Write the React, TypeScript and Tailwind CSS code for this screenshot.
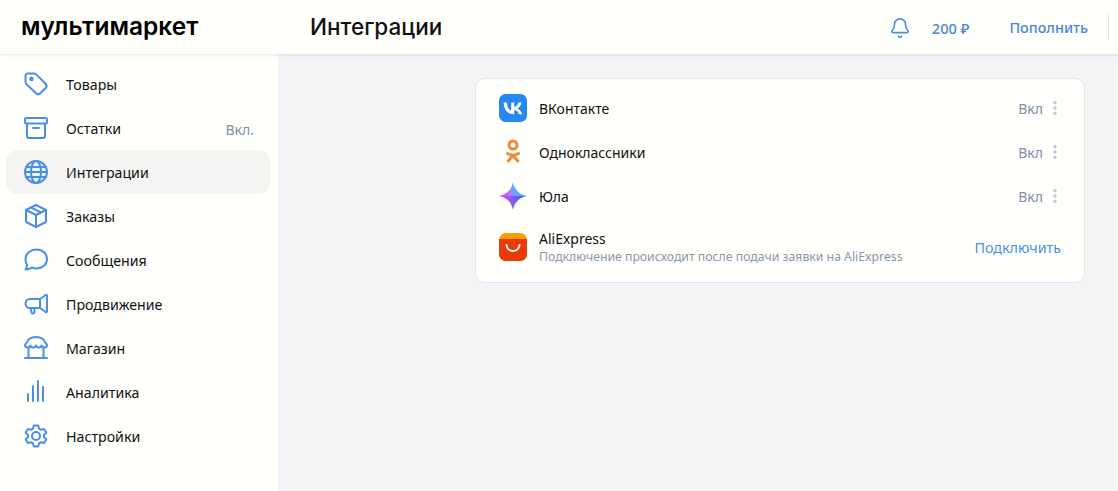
import React from "react";
import { Bell, MoreVertical } from "lucide-react";

const stroke = {
  fill: "none",
  stroke: "#4a8fe7",
  strokeWidth: 2,
  strokeLinecap: "round" as const,
  strokeLinejoin: "round" as const,
};

function NavIcon({ name }: { name: string }) {
  return (
    <svg width="28" height="28" viewBox="0 0 28 28" {...stroke}>
      {name === "tag" && (
        <>
          <path d="M3.500 5.500a2 2 0 0 1 2-2h6.600a3 3 0 0 1 2.100.9l9.400 9.400a3 3 0 0 1 0 4.200l-5.300 5.300a3 3 0 0 1-4.200 0L4.700 14.400a3 3 0 0 1-1.200-2.400z" />
          <circle cx="9.500" cy="9" r="1.200" fill="#4a8fe7" />
        </>
      )}
      {name === "box" && (
        <>
          <rect x="3" y="4" width="22" height="5.500" rx="1.500" />
          <path d="M5 9.500V22a2 2 0 0 0 2 2h14a2 2 0 0 0 2-2V9.500M11 14h6" />
        </>
      )}
      {name === "globe" && (
        <>
          <circle cx="14" cy="14" r="11" />
          <path d="M3 14h22M4.500 9h19M4.500 19h19" />
          <ellipse cx="14" cy="14" rx="5" ry="11" />
        </>
      )}
      {name === "cube" && (
        <>
          <path d="M14 3l10 5v12l-10 5-10-5V8z" />
          <path d="M4 8l10 5 10-5M14 13v12M9 5.500l10 5" />
        </>
      )}
      {name === "chat" && (
        <path d="M14.500 3.500c6 0 10.500 4 10.500 9.500s-4.500 9.500-10.500 9.500c-1.700 0-3.300-.3-4.700-1-1.500 1.200-3.500 2-6.300 2 1-1.500 1.600-3 1.500-5C3.800 17 3.500 15 3.500 13c0-5.500 5-9.500 11-9.500z" />
      )}
      {name === "megaphone" && (
        <>
          <path d="M18 9 23 5.500a1 1 0 0 1 2 .8v14.400a1 1 0 0 1-2 .8l-5-3.500zM18 9H8a4.500 4.500 0 0 0 0 9h10z" />
          <path d="M8.500 18l1 4a1.500 1.500 0 0 0 3 0l-.5-4" />
        </>
      )}
      {name === "shop" && (
        <>
          <path d="M7 5c2-1.300 4.500-2 7-2s5 .7 7 2l4 6c0 1.500-1.200 2.500-2.700 2.500-1.400 0-2.400-1-2.700-2-.3 1-1.300 2-2.800 2-1.400 0-2.500-1-2.800-2-.3 1-1.400 2-2.800 2-1.500 0-2.500-1-2.800-2-.3 1-1.300 2-2.700 2C4.200 13.500 3 12.500 3 11z" />
          <path d="M6.500 13.500V23M21.500 13.500V23M3 24h22" />
        </>
      )}
      {name === "bars" && <path d="M6 23v-7M11 23V8M16 23V3M21 23V9" />}
      {name === "gear" && (
        <>
          <circle cx="14" cy="14" r="4" />
          <path d="M11.800 3.500h4.400l.8 3.200 1.900 1.100 3.200-.9 2.200 3.800-2.400 2.300v2l2.400 2.300-2.200 3.800-3.200-.9-1.900 1.100-.8 3.200h-4.400l-.8-3.200-1.900-1.100-3.200.9-2.200-3.800 2.400-2.300v-2L3.700 10.700l2.200-3.800 3.200.9L11 6.700z" />
        </>
      )}
    </svg>
  );
}

const navItems = [
  { icon: "tag", label: "Товары" },
  { icon: "box", label: "Остатки", note: "Вкл." },
  { icon: "globe", label: "Интеграции", active: true },
  { icon: "cube", label: "Заказы" },
  { icon: "chat", label: "Сообщения" },
  { icon: "megaphone", label: "Продвижение" },
  { icon: "shop", label: "Магазин" },
  { icon: "bars", label: "Аналитика" },
  { icon: "gear", label: "Настройки" },
];

function VkLogo() {
  return (
    <svg width="28" height="28" viewBox="0 0 28 28">
      <rect width="28" height="28" rx="6.500" fill="#2787f5" />
      <path
        fill="#fff"
        d="M14.900 20.200C8.500 20.200 4.900 15.800 4.700 8.500h3.200c.1 5.400 2.500 7.600 4.300 8.100V8.500h3v4.600c1.800-.2 3.700-2.300 4.400-4.600h3c-.5 2.900-2.600 5-4.100 5.900 1.500.7 3.900 2.600 4.800 5.800h-3.300c-.7-2.200-2.500-3.900-4.800-4.100v4.100z"
      />
    </svg>
  );
}

function OkLogo() {
  return (
    <svg width="28" height="28" viewBox="0 0 28 28">
      <g fill="none" stroke="#ee8a3a" strokeWidth="3" strokeLinecap="round">
        <circle cx="14" cy="7" r="4" />
        <path d="M8.500 15.500c3.300 2 7.700 2 11 0M14 17.500l-4.800 5.500M14 17.500l4.800 5.500" />
      </g>
    </svg>
  );
}

function YoulaLogo() {
  return (
    <svg width="28" height="28" viewBox="0 0 28 28">
      <defs>
        <linearGradient id="youla" x1="0.1" y1="0.6" x2="0.9" y2="0.3">
          <stop offset="0" stopColor="#f04cf0" />
          <stop offset="0.45" stopColor="#6fa4fa" />
          <stop offset="1" stopColor="#1fd0fb" />
        </linearGradient>
        <linearGradient id="youlaLow" x1="0" y1="0" x2="1" y2="0">
          <stop offset="0" stopColor="#d055f2" />
          <stop offset="1" stopColor="#2f66f5" />
        </linearGradient>
      </defs>
      <path fill="url(#youla)" d="M14 0c1.500 7.500 6 12.500 14 14H0C8 12.500 12.500 7.500 14 0z" />
      <path fill="url(#youlaLow)" d="M0 14h28c-8 1.500-12.500 6.500-14 14-1.500-7.500-6-12.500-14-14z" />
    </svg>
  );
}

function AliLogo() {
  return (
    <svg width="28" height="28" viewBox="0 0 28 28">
      <rect width="28" height="28" rx="7" fill="#ff9a00" />
      <path fill="#e93a08" d="M0 6h28v15a7 7 0 0 1-7 7H7a7 7 0 0 1-7-7z" />
      <path
        d="M7.500 12c.8 8 12.200 8 13 0"
        fill="none"
        stroke="#fff"
        strokeWidth="2"
        strokeLinecap="round"
      />
    </svg>
  );
}

function OnRow({ logo, name }: { logo: React.ReactNode; name: string }) {
  return (
    <div className="flex h-11 items-center">
      {logo}
      <span className="ml-3 text-[14px] text-[#111]">{name}</span>
      <span className="ml-auto text-[14px] text-[#7f8fa6]">Вкл</span>
      <MoreVertical size={18} strokeWidth={2.500} className="ml-[3px] mr-[-3px] text-[#c1c8d2]" />
    </div>
  );
}

export default function App() {
  return (
    <div className="flex h-[491px] w-[1118px] flex-col overflow-hidden bg-[#f4f4f6] font-['Noto_Sans','Open_Sans',sans-serif]">
      <header className="relative z-10 flex h-[54px] shrink-0 items-center bg-[#fffffc] shadow-[0_1px_3px_rgba(0,0,0,0.1)]">
        <div className="w-[310px] pl-[21px] pb-0.5 font-['Inter',sans-serif] text-[24.5px] font-semibold text-black">
          мультимаркет
        </div>
        <h1 className="font-['Inter',sans-serif] text-[22.5px] font-medium text-[#111]">Интеграции</h1>
        <div className="ml-auto flex items-center text-[14.4px] font-medium text-[#4a86d8]">
          <Bell size={22} strokeWidth={1.800} className="mt-0.5 text-[#4a8fe7]" />
          <span className="ml-[21px] pt-0.5 text-[14.7px]">200 ₽</span>
          <span className="ml-10 pt-0.5">Пополнить</span>
          <span className="ml-5 h-7 w-px bg-[#e4e4e4]" />
          <span className="w-[9px]" />
        </div>
      </header>

      <div className="flex min-h-0 flex-1">
        <aside className="w-[278px] shrink-0 bg-[#fffffc] pt-2 pl-1.5 pr-2">
          {navItems.map((item) => (
            <div
              key={item.label}
              className={`flex h-11 items-center rounded-xl pl-4 pr-4 ${item.active ? "bg-[#f4f4f2]" : ""}`}
            >
              <NavIcon name={item.icon} />
              <span className="ml-[16px] pt-0.5 text-[14.2px] text-[#111]">{item.label}</span>
              {item.note && <span className="ml-auto pt-0.5 text-[14px] text-[#7f8fa6]">{item.note}</span>}
            </div>
          ))}
        </aside>

        <main className="flex-1 pt-6 pl-[197px]">
          <div className="w-[610px] rounded-[10px] border border-[#e6e6e8] bg-[#fffffc] px-[23px] pt-[7px]">
            <OnRow logo={<VkLogo />} name="ВКонтакте" />
            <OnRow logo={<OkLogo />} name="Одноклассники" />
            <OnRow logo={<YoulaLogo />} name="Юла" />
            <div className="flex h-16 items-center pb-1.5">
              <AliLogo />
              <div className="ml-3 flex flex-col">
                <span className="text-[14px] leading-[18px] text-[#111]">AliExpress</span>
                <span className="mt-px text-[12.25px] leading-[16px] text-[#8a97a8]">
                  Подключение происходит после подачи заявки на AliExpress
                </span>
              </div>
              <span className="ml-auto pt-0.5 text-[14.3px] text-[#4a8fe7]">Подключить</span>
            </div>
          </div>
        </main>
      </div>
    </div>
  );
}
